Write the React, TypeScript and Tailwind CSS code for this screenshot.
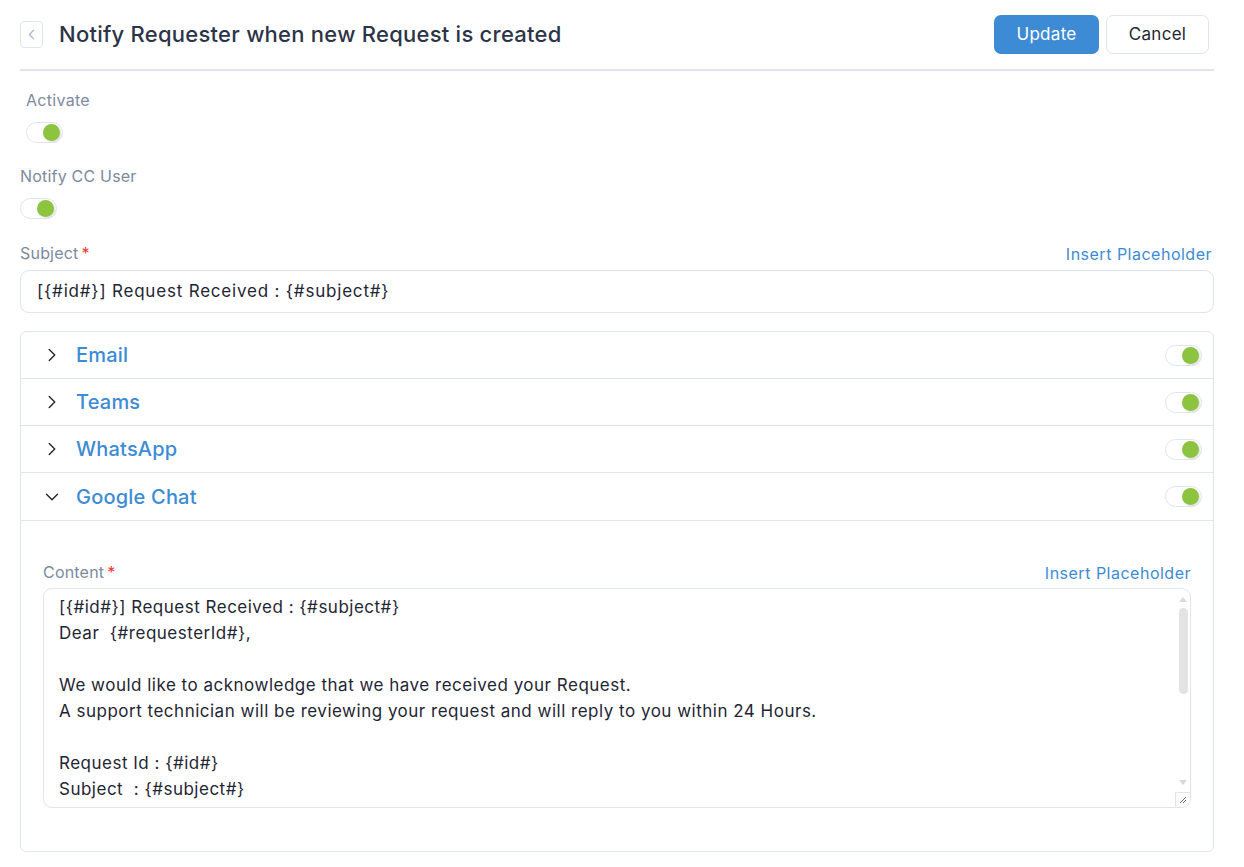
import { ChevronLeft, ChevronRight, ChevronDown } from "lucide-react";

const Toggle = ({ className = "" }: { className?: string }) => (
  <div
    className={`flex h-[21px] w-[37px] items-center justify-end rounded-full border border-[#dfe4ee] bg-white pr-[2px] ${className}`}
  >
    <div className="h-[17px] w-[17px] rounded-full bg-[#8cc43f] shadow-[1px_1px_2px_rgba(0,0,0,0.15)]" />
  </div>
);

const channels = ["Email", "Teams", "WhatsApp"];

const contentLines = [
  "[{#id#}] Request Received : {#subject#}",
  "Dear  {#requesterId#},",
  "",
  "We would like to acknowledge that we have received your Request.",
  "A support technician will be reviewing your request and will reply to you within 24 Hours.",
  "",
  "Request Id : {#id#}",
  "Subject  : {#subject#}",
];

export default function App() {
  return (
    <div className="min-h-screen bg-white pl-5 pr-[30px] font-['Inter',sans-serif] text-[#1f2633]">
      <header className="flex h-[71px] items-center justify-between border-b-2 border-[#dfe4ee] pr-[5px]">
        <div className="flex items-center">
          <button className="flex h-[27px] w-[23px] items-center justify-center rounded-[4px] border border-[#dfe4ee] text-[#a5b3c8]">
            <ChevronLeft size={17} strokeWidth={1.5} />
          </button>
          <h1 className="ml-[16px] text-[22px] font-medium tracking-[0.25px] text-[#2c3547]">
            Notify Requester when new Request is created
          </h1>
        </div>
        <div className="flex items-center gap-[7px]">
          <button className="h-[39px] w-[105px] rounded-[7px] bg-[#3d8bd4] text-[17px] tracking-[0.3px] text-white">
            Update
          </button>
          <button className="h-[39px] w-[103px] rounded-[7px] border border-[#dfe4ee] bg-white text-[17px] tracking-[0.3px] text-[#1f2633]">
            Cancel
          </button>
        </div>
      </header>

      <div className="pt-[18px]">
        <div className="pl-[6px]">
          <div className="text-[16px] leading-[22px] tracking-[0.3px] text-[#7d8a9e]">Activate</div>
          <Toggle className="mt-[11px]" />
        </div>

        <div className="mt-[22px] text-[16px] leading-[22px] tracking-[0.2px] text-[#7d8a9e]">Notify CC User</div>
        <Toggle className="mt-[11px]" />

        <div className="mt-[23px] flex items-end justify-between">
          <div className="text-[16px] leading-[22px] tracking-[0.2px] text-[#7d8a9e]">
            Subject<span className="ml-[3px] text-[#e53935]">*</span>
          </div>
          <a className="mr-[2px] text-[16px] leading-[20px] tracking-[0.5px] text-[#3d8bd4]">Insert Placeholder</a>
        </div>
        <div className="mt-[6px] flex h-[43px] items-center rounded-[9px] border border-[#dfe4ee] px-4 text-[17px] tracking-[0.8px]">
          [{"{#id#}"}] Request Received : {"{#subject#}"}
        </div>

        <div className="mt-[18px] rounded-[6px] border border-[#dfe4ee]">
          {channels.map((c) => (
            <div
              key={c}
              className="flex h-[47px] items-center justify-between border-b border-[#dfe4ee] pl-[20px] pr-[11px]"
            >
              <div className="flex items-center">
                <ChevronRight size={22} strokeWidth={1.5} className="text-[#1f2633]" />
                <span className="ml-[13px] text-[20px] font-medium tracking-[0.2px] text-[#3d8bd4]">{c}</span>
              </div>
              <Toggle />
            </div>
          ))}
          <div className="flex h-[48px] items-center justify-between border-b border-[#dfe4ee] pl-[20px] pr-[11px]">
            <div className="flex items-center">
              <ChevronDown size={22} strokeWidth={1.5} className="text-[#1f2633]" />
              <span className="ml-[13px] text-[20px] font-medium tracking-[0.2px] text-[#3d8bd4]">Google Chat</span>
            </div>
            <Toggle />
          </div>

          <div className="px-[22px] pb-[43px] pt-[40px]">
            <div className="flex items-end justify-between">
              <div className="text-[16px] leading-[22px] tracking-[0.2px] text-[#7d8a9e]">
                Content<span className="ml-[3px] text-[#e53935]">*</span>
              </div>
              <a className="text-[16px] leading-[20px] tracking-[0.5px] text-[#3d8bd4]">Insert Placeholder</a>
            </div>
            <div className="relative mt-[5px] h-[220px] overflow-hidden rounded-[9px] border border-[#dfe4ee]">
              <div className="pl-[15px] pt-[5px] text-[17px] leading-[26px] tracking-[0.5px]">
                {contentLines.map((l, i) => (
                  <div key={i} className="h-[26px] whitespace-pre">
                    {l}
                  </div>
                ))}
              </div>
              <div className="absolute right-[2px] top-[8px] flex h-[188px] w-[10px] flex-col items-center">
                <div className="h-0 w-0 border-x-[4px] border-b-[5px] border-x-transparent border-b-[#d9d9d9]" />
                <div className="mt-[6px] h-[86px] w-[9px] rounded-full bg-[#e3e3e3]" />
                <div className="flex-1" />
                <div className="h-0 w-0 border-x-[4px] border-t-[5px] border-x-transparent border-t-[#d9d9d9]" />
              </div>
              <div className="absolute bottom-0 right-0 flex h-[15px] w-[15px] items-center justify-center border-l border-t border-[#dfe4ee] bg-white">
                <svg width="8" height="8" viewBox="0 0 8 8" className="text-[#666]">
                  <path d="M7 1L1 7M7 4L4 7" stroke="currentColor" strokeWidth="1" />
                </svg>
              </div>
            </div>
          </div>
        </div>
      </div>
    </div>
  );
}
